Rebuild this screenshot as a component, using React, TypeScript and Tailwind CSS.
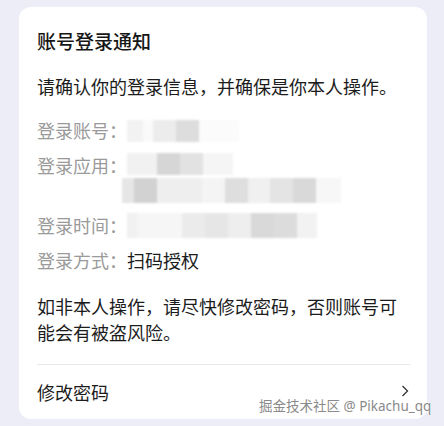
import React from "react";

const font = { fontFamily: '"Noto Sans CJK SC", "Noto Sans", sans-serif' };

function Blk({ w, c }: { w: number; c: string }) {
  return <div style={{ width: w, background: c }} className="h-full" />;
}

export default function App() {
  return (
    <div className="w-[444px] h-[426px] bg-[#ecedf7] pt-[7px] pl-[19px] relative overflow-hidden" style={font}>
      <div className="w-[408px] h-[412px] bg-white rounded-[12px] pl-[18px] pr-[17px] pt-[20px] flex flex-col">
        <div className="text-[19px] leading-[28px] font-medium text-[#161616]">账号登录通知</div>
        <div className="mt-[18px] text-[18px] leading-[26px] text-[#1c1c1c] whitespace-nowrap">
          请确认你的登录信息，并确保是你本人操作。
        </div>
        <div className="mt-[18px] flex flex-col gap-[9px] text-[18px] leading-[26px]">
          <div className="flex">
            <span className="text-[#9a9a9a]">登录账号：</span>
            <div className="flex h-[22px] mt-[3px] blur-[1px]">
              <Blk w={16} c="#f2f2f2" />
              <Blk w={10} c="#fafafa" />
              <Blk w={23} c="#ececec" />
              <Blk w={23} c="#dddddd" />
              <Blk w={40} c="#fbfbfb" />
            </div>
          </div>
          <div className="flex">
            <span className="text-[#9a9a9a]">登录应用：</span>
            <div className="flex flex-col gap-[3px] mt-[1px] blur-[1px]">
              <div className="flex h-[22px]">
                <Blk w={30} c="#f1f1f1" />
                <Blk w={23} c="#d6d6d6" />
                <Blk w={23} c="#e2e2e2" />
                <Blk w={30} c="#f5f5f5" />
              </div>
              <div className="flex h-[25px] -ml-[5px]">
                <Blk w={12} c="#e6e6e6" />
                <Blk w={23} c="#d2d2d2" />
                <Blk w={45} c="#eeeeee" />
                <Blk w={23} c="#f4f4f4" />
                <Blk w={23} c="#dedede" />
                <Blk w={22} c="#f0f0f0" />
                <Blk w={23} c="#e4e4e4" />
                <Blk w={23} c="#d9d9d9" />
                <Blk w={25} c="#f7f7f7" />
              </div>
            </div>
          </div>
          <div className="flex">
            <span className="text-[#9a9a9a]">登录时间：</span>
            <div className="flex h-[25px] mt-[1px] blur-[1px]">
              <Blk w={10} c="#f0f0f0" />
              <Blk w={45} c="#f6f6f6" />
              <Blk w={23} c="#ebebeb" />
              <Blk w={23} c="#e6e6e6" />
              <Blk w={23} c="#eeeeee" />
              <Blk w={23} c="#d9d9d9" />
              <Blk w={23} c="#dcdcdc" />
              <Blk w={20} c="#f2f2f2" />
            </div>
          </div>
          <div className="flex">
            <span className="text-[#9a9a9a]">登录方式：</span>
            <span className="text-[#1c1c1c]">扫码授权</span>
          </div>
        </div>
        <div className="mt-[20px] text-[18px] leading-[26px] text-[#1c1c1c]">
          如非本人操作，请尽快修改密码，否则账号可能会有被盗风险。
        </div>
        <div className="mt-[19px] h-px bg-[#e8e8e8]" />
        <div className="flex items-center justify-between h-[54px] text-[18px] text-[#1c1c1c]">
          <span>修改密码</span>
          <svg width="8" height="12" viewBox="0 0 8 12" className="mr-[1px] -mt-[3px]">
            <path d="M1.5 1 L6.5 6 L1.5 11" fill="none" stroke="#333" strokeWidth="1.3" />
          </svg>
        </div>
      </div>
      <div
        className="absolute left-[259px] top-[397px] text-[13.5px] leading-[18px] text-[#8a8a8a] whitespace-nowrap"
        style={{ textShadow: "0 0 2px #fff, 0 0 2px #fff", fontFamily: '"Noto Sans", "Noto Sans CJK SC", sans-serif' }}
      >
        掘金技术社区 @ Pikachu_qq
      </div>
    </div>
  );
}
